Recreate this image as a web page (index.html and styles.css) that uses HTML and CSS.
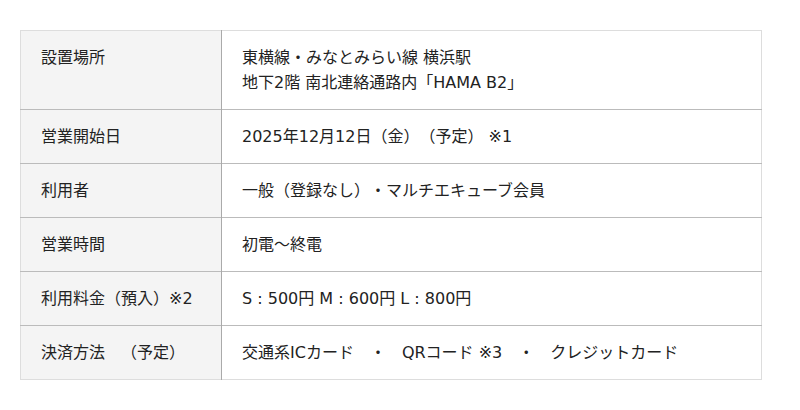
FILE: index.html
```html
<!DOCTYPE html>
<html lang="ja">
<head>
<meta charset="utf-8">
<link rel="stylesheet" href="styles.css">
</head>
<body>
<div class="wrap">
<table class="info">
<tr><th>設置場所</th><td>東横線・みなとみらい線 横浜駅<br>地下2階 南北連絡通路内「HAMA B2」</td></tr>
<tr><th>営業開始日</th><td>2025年12月12日（金）（予定） ※1</td></tr>
<tr><th>利用者</th><td>一般（登録なし）・マルチエキューブ会員</td></tr>
<tr><th>営業時間</th><td>初電～終電</td></tr>
<tr><th>利用料金（預入）※2</th><td>S : 500円 M : 600円 L : 800円</td></tr>
<tr><th>決済方法　（予定）</th><td>交通系ICカード　・　QRコード ※3　・　クレジットカード</td></tr>
</table>
</div>
</body>
</html>
```
FILE: styles.css
```css
html, body {
  margin: 0;
  padding: 0;
  background: #fff;
}
.wrap {
  padding: 30px 38px 0 20px;
}
.info {
  width: 742px;
  border-collapse: collapse;
  border: 1px solid #ddd;
  font-family: "DejaVu Sans", "Noto Sans CJK JP", sans-serif;
  font-size: 16px;
  line-height: 25px;
  color: #222;
  text-spacing-trim: space-all;
}
.info th, .info td {
  text-align: left;
  vertical-align: top;
  font-weight: normal;
  padding: 14px 20px;
  border-top: 1px solid #bbb;
}
.info tr:first-child th, .info tr:first-child td {
  border-top: 1px solid #ddd;
}
.info th {
  width: 160px;
  background: #f4f4f4;
  border-right: 1px solid #aaa;
  white-space: nowrap;
}
```
